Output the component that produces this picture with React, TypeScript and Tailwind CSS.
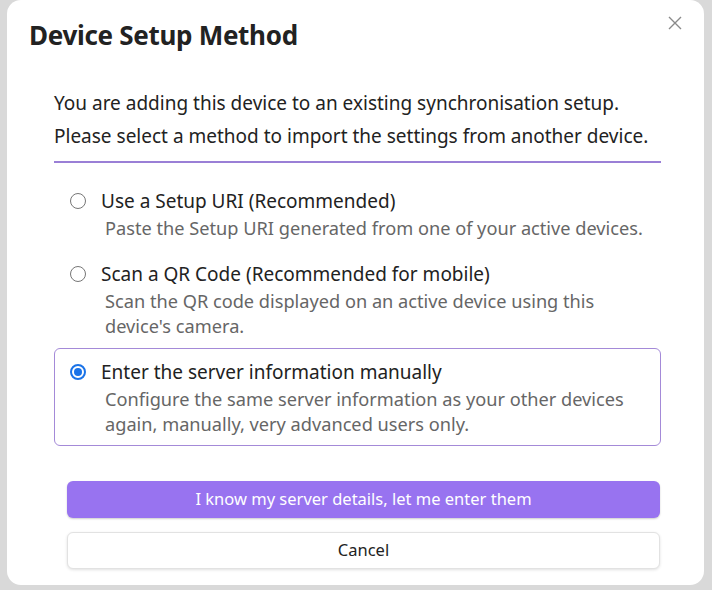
import React from "react";

function Radio({ checked }: { checked?: boolean }) {
  return checked ? (
    <span className="flex h-[16px] w-[16px] items-center justify-center rounded-full border-2 border-[#1a73e8] bg-white">
      <span className="h-[8px] w-[8px] rounded-full bg-[#1a73e8]" />
    </span>
  ) : (
    <span className="h-[16px] w-[16px] rounded-full border border-[#767676] bg-white" />
  );
}

function Option({
  title,
  desc,
  checked,
}: {
  title: string;
  desc: React.ReactNode;
  checked?: boolean;
}) {
  return (
    <div
      className={
        checked
          ? "rounded-[6px] border border-[#a48ad8] px-[14px] pt-[10px] pb-[8px]"
          : "border border-transparent px-[14px] pt-[10px] pb-[8px]"
      }
    >
      <div className="flex items-center">
        <div className="flex w-[32px] shrink-0 items-center pl-[1px]">
          <Radio checked={checked} />
        </div>
        <div className="whitespace-nowrap text-[19px] leading-[26px] text-[#222]">{title}</div>
      </div>
      <div className="mt-[2px] whitespace-nowrap pl-[36px] text-[18.2px] leading-[25px] text-[#666]">{desc}</div>
    </div>
  );
}

export default function App() {
  return (
    <div
      className="relative h-[590px] w-[712px] overflow-hidden bg-[#d9d9d9]"
      style={{ fontFamily: '"Noto Sans", "Open Sans", sans-serif' }}
    >
      <div className="ml-[7px] h-[585px] w-[697px] rounded-[14px] bg-white pl-[47px] pr-[43px] pt-[16px]">
        <button className="absolute right-[27px] top-[13px] flex h-[20px] w-[20px] items-center justify-center text-[#8a8a8a]">
          <svg width="16" height="16" viewBox="0 0 16 16" fill="none" stroke="currentColor" strokeWidth="1.4">
            <path d="M2 2 L14 14 M14 2 L2 14" />
          </svg>
        </button>
        <h1 className="-ml-[25px] text-[26px] font-bold leading-[38px] tracking-[-0.3px] text-[#222]">
          Device Setup Method
        </h1>
        <div className="mt-[33px] whitespace-nowrap border-b-2 border-[#9a7fd6] pb-[8px] text-[19px] leading-[33px] text-[#222]">
          <p>You are adding this device to an existing synchronisation setup.</p>
          <p>Please select a method to import the settings from another device.</p>
        </div>
        <div className="mt-[14px] flex flex-col">
          <Option
            title="Use a Setup URI (Recommended)"
            desc="Paste the Setup URI generated from one of your active devices."
          />
          <Option
            title="Scan a QR Code (Recommended for mobile)"
            desc={
              <>
                Scan the QR code displayed on an active device using this
                <br />
                device's camera.
              </>
            }
          />
          <Option
            checked
            title="Enter the server information manually"
            desc={
              <>
                Configure the same server information as your other devices
                <br />
                again, manually, very advanced users only.
              </>
            }
          />
        </div>
        <div className="mt-[35px] flex flex-col gap-[14px] pl-[13px] pr-[1px]">
          <button className="h-[37px] w-full rounded-[6px] bg-[#9873f0] text-[16.5px] text-white shadow-[0_1px_2px_rgba(0,0,0,0.2)]">
            I know my server details, let me enter them
          </button>
          <button className="h-[37px] w-full rounded-[6px] border border-[#e2e2e2] bg-white text-[16.5px] text-[#222] shadow-[0_1px_3px_rgba(0,0,0,0.12)]">
            Cancel
          </button>
        </div>
      </div>
    </div>
  );
}
